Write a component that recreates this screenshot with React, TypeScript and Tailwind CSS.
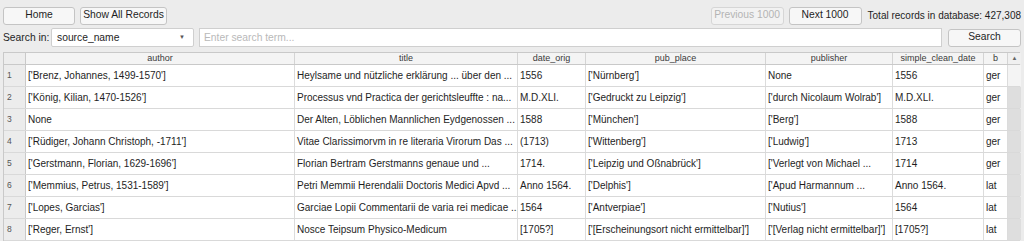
import React from "react";

const rows: string[][] = [
  ["['Brenz, Johannes, 1499-1570']", "Heylsame und nützliche erklärung ... über den ...", "1556", "['Nürnberg']", "None", "1556", "ger"],
  ["['König, Kilian, 1470-1526']", "Processus vnd Practica der gerichtsleuffte : na...", "M.D.XLI.", "['Gedruckt zu Leipzig']", "['durch Nicolaum Wolrab']", "M.D.XLI.", "ger"],
  ["None", "Der Alten, Löblichen Mannlichen Eydgenossen ...", "1588", "['München']", "['Berg']", "1588", "ger"],
  ["['Rüdiger, Johann Christoph, -1711']", "Vitae Clarissimorvm in re literaria Virorum Das ...", "(1713)", "['Wittenberg']", "['Ludwig']", "1713", "ger"],
  ["['Gerstmann, Florian, 1629-1696']", "Florian Bertram Gerstmanns genaue und ...", "1714.", "['Leipzig und Oßnabrück']", "['Verlegt von Michael ...", "1714", "ger"],
  ["['Memmius, Petrus, 1531-1589']", "Petri Memmii Herendalii Doctoris Medici Apvd ...", "Anno 1564.", "['Delphis']", "['Apud Harmannum ...", "Anno 1564.", "lat"],
  ["['Lopes, Garcias']", "Garciae Lopii Commentarii de varia rei medicae ...", "1564", "['Antverpiae']", "['Nutius']", "1564", "lat"],
  ["['Reger, Ernst']", "Nosce Teipsum Physico-Medicum", "[1705?]", "['[Erscheinungsort nicht ermittelbar]']", "['[Verlag nicht ermittelbar]']", "[1705?]", "lat"],
];

const headers = ["author", "title", "date_orig", "pub_place", "publisher", "simple_clean_date", "b"];
const cols = "grid-cols-[22px_269px_223px_68px_180px_127px_91px_24px_13px]";

export default function App() {
  return (
    <div
      className="w-[1024px] h-[241px] overflow-hidden bg-[#ececec] text-[#1e1e1e] px-[3px] pt-[6px]"
      style={{ fontFamily: '"Liberation Sans", Arial, sans-serif' }}
    >
      <div className="flex items-center h-[19px] text-[10.3px]">
        <button className="w-[72px] h-[18px] bg-[#f7f7f7] border border-[#c4c4c4] rounded-[3px] leading-none whitespace-nowrap">Home</button>
        <button className="ml-[5px] w-[87px] h-[18px] bg-[#f7f7f7] border border-[#c4c4c4] rounded-[3px] leading-none whitespace-nowrap">Show All Records</button>
        <div className="flex-1" />
        <button className="w-[73px] h-[18px] bg-[#f2f2f2] border border-[#d6d6d6] rounded-[3px] leading-none text-[#b4b4b4] whitespace-nowrap">Previous 1000</button>
        <button className="ml-[5px] w-[73px] h-[18px] bg-[#f7f7f7] border border-[#c4c4c4] rounded-[3px] leading-none whitespace-nowrap">Next 1000</button>
        <span className="ml-[6px] text-[10px] whitespace-nowrap">Total records in database: 427,308</span>
      </div>
      <div className="flex items-center h-[19px] mt-[3px] text-[10.3px]">
        <span className="w-[48px] whitespace-nowrap">Search in:</span>
        <div className="w-[143px] h-[19px] bg-white border border-[#cfcfcf] rounded-[2px] flex items-center pl-[5px] pr-[8px]">
          <span className="flex-1">source_name</span>
          <span className="text-[6px] text-[#555]">▼</span>
        </div>
        <div className="ml-[5px] flex-1 h-[19px] bg-white border border-[#cfcfcf] flex items-center pl-[4px] text-[#b9b9b9]">Enter search term...</div>
        <button className="ml-[6px] w-[73px] h-[18px] bg-[#f7f7f7] border border-[#c4c4c4] rounded-[3px] leading-none">Search</button>
      </div>
      <div className="mt-[5px] w-[1017px] border-t border-l border-[#c9c9c9] bg-white">
        <div className={`grid ${cols} h-[12px] bg-[#f4f4f4] border-b border-[#c9c9c9] text-[9px] text-[#3a3a3a] leading-[11px]`}>
          <div className="bg-[#ededed] border-r border-[#c9c9c9]" />
          {headers.map((h) => (
            <div key={h} className="border-r border-[#d4d4d4] text-center overflow-hidden whitespace-nowrap">{h}</div>
          ))}
          <div className="bg-[#f0f0f0] flex justify-center text-[6px] text-[#666] leading-[10px]">▲</div>
        </div>
        {rows.map((r, i) => (
          <div key={i} className={`grid ${cols} h-[22px] border-b border-[#d9d9d9] text-[10px]`}>
            <div className="bg-[#ececec] border-r border-[#c9c9c9] text-[8.5px] text-[#555] pl-[3px] flex items-center">{i + 1}</div>
            {r.map((c, j) => (
              <div key={j} className="border-r border-[#dcdcdc] pl-[2px] flex items-center overflow-hidden whitespace-nowrap">{c}</div>
            ))}
            <div className={i === 0 ? "bg-[#f4f4f4]" : "bg-[#dedede]"} />
          </div>
        ))}
      </div>
    </div>
  );
}
